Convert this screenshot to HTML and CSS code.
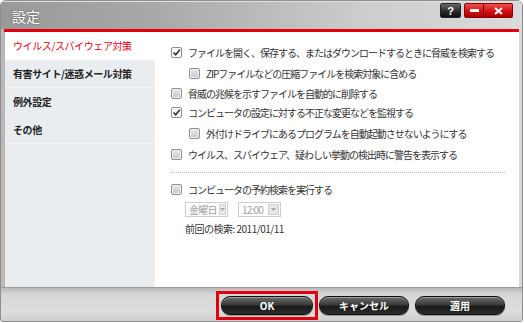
FILE: index.html
```html
<!DOCTYPE html>
<html lang="ja">
<head>
<meta charset="UTF-8">
<title>設定</title>
<link rel="stylesheet" href="styles.css">
</head>
<body>
<div class="window">
    <div class="titlebar">
        <span class="title">設定</span>
        <div class="controls">
            <span class="ctl help">?</span>
            <span class="ctl min"><svg width="9" height="3" viewBox="0 0 9 3"><rect width="9" height="3" fill="#fff"/></svg></span>
            <span class="ctl close"><svg width="9" height="8" viewBox="0 0 9 8"><path d="M1 1 L8 7 M8 1 L1 7" stroke="#fff" stroke-width="2.2"/></svg></span>
        </div>
    </div>
    <div class="accent"></div>

    <div class="main">
        <ul class="sidebar">
            <li class="active">ウイルス/スパイウェア対策</li>
            <li>有害サイト/迷惑メール対策</li>
            <li>例外設定</li>
            <li>その他</li>
        </ul>

        <div class="content">
            <label class="row"><span class="cb checked"></span>ファイルを開く、保存する、またはダウンロードするときに脅威を検索する</label>
            <label class="row sub"><span class="cb"></span>ZIPファイルなどの圧縮ファイルを検索対象に含める</label>
            <label class="row tight"><span class="cb"></span>脅威の兆候を示すファイルを自動的に削除する</label>
            <label class="row"><span class="cb checked"></span>コンピュータの設定に対する不正な変更などを監視する</label>
            <label class="row sub"><span class="cb"></span>外付けドライブにあるプログラムを自動起動させないようにする</label>
            <label class="row"><span class="cb"></span>ウイルス、スパイウェア、疑わしい挙動の検出時に警告を表示する</label>

            <div class="divider"></div>

            <label class="row"><span class="cb"></span>コンピュータの予約検索を実行する</label>
            <div class="schedule">
                <span class="select day">金曜日<span class="arrow"></span></span>
                <span class="select time">12:00<span class="arrow"></span></span>
            </div>
            <div class="last-scan">前回の検索: 2011/01/11</div>
        </div>
    </div>

    <div class="footer">
        <span class="ok-frame"><button class="btn ok">OK</button></span>
        <button class="btn">キャンセル</button>
        <button class="btn">適用</button>
    </div>
</div>
</body>
</html>
```

FILE: styles.css
```css
body {
    margin: 0;
    padding: 0;
    background-color: #fff;
    font-family: "Noto Sans CJK JP", "Liberation Sans", sans-serif;
}

.window {
    width: 521px;
    height: 320px;
    border: 1px solid #8e8e8e;
    border-radius: 6px 6px 3px 3px;
    background: linear-gradient(90deg, #b9b9b9, #cfcfcf 60%, #d9d9d9);
    display: flex;
    flex-direction: column;
    overflow: hidden;
}

/* title bar */
.titlebar {
    height: 28px;
    display: flex;
    align-items: flex-start;
    justify-content: space-between;
    background: linear-gradient(90deg, #999 0%, #a9a9a9 30%, #cdcdcd 70%, #dadada 100%);
    box-shadow: inset 0 1px 0 #e2e2e2;
}

.title {
    color: #fff;
    font-size: 14px;
    line-height: 14px;
    margin: 8px 0 0 11px;
    text-shadow: 0 0 2px rgba(0, 0, 0, 0.45);
}

.controls {
    display: flex;
    margin: 2px 9px 0 0;
}

.ctl {
    height: 13px;
    display: flex;
    align-items: center;
    justify-content: center;
    border-radius: 2px;
    color: #fff;
    font: bold 11px "Liberation Sans", sans-serif;
}

.help {
    width: 19px;
    margin-right: 3px;
    background: linear-gradient(#6a6a6a, #2a2a2a 55%, #111);
    border: 1px solid #222;
}

.min,
.close {
    background: linear-gradient(#f05050, #d01010 55%, #a80000);
    border: 1px solid #8a0000;
}

.min {
    width: 18px;
    border-radius: 2px 0 0 2px;
}

.close {
    width: 28px;
    border-left: none;
    border-radius: 0 2px 2px 0;
}

.accent {
    height: 3px;
    margin: 0 3px;
    background-color: #e4000b;
}

/* main area */
.main {
    height: 255px;
    margin: 0 3px;
    display: flex;
    background-color: #fff;
}

.sidebar {
    width: 150px;
    margin: 0;
    padding: 0;
    list-style: none;
    background-color: #e9edef;
    border-left: 1px solid #b4b4b4;
}

.sidebar li {
    height: 27px;
    line-height: 27px;
    padding-left: 8px;
    font-size: 10px;
    font-weight: bold;
    letter-spacing: -0.4px;
    color: #222;
    border-bottom: 1px dotted #fff;
}

.sidebar li.active {
    background-color: #fff;
    color: #e0061a;
    font-weight: normal;
}

.content {
    flex: 1;
    padding: 10px 0 0 16px;
    font-size: 10px;
    letter-spacing: -1px;
    color: #333;
}

.row {
    height: 21px;
    display: flex;
    align-items: center;
    white-space: nowrap;
}

.row.tight {
    height: 18px;
}

.row.sub {
    padding-left: 18px;
}

.cb {
    width: 9px;
    height: 9px;
    margin-right: 6px;
    border: 1px solid #8e8e8e;
    border-radius: 2px;
    background: linear-gradient(#e6e6e6, #c9c9c9);
    box-shadow: inset 0 0 0 1px #f2f2f2;
    flex-shrink: 0;
}

.cb.checked {
    background: #fafafa url("data:image/svg+xml,%3Csvg xmlns='http://www.w3.org/2000/svg' width='9' height='9'%3E%3Cpath d='M1.5 4.5 L3.7 6.8 L7.8 1.8' fill='none' stroke='%23333' stroke-width='1.6'/%3E%3C/svg%3E") no-repeat center;
    box-shadow: none;
}

.divider {
    margin: 7px 14px 6px 0;
    border-top: 1px dotted #b8b8b8;
}

.schedule {
    display: flex;
    gap: 10px;
    margin: 2px 0 0 14px;
}

.select {
    box-sizing: border-box;
    width: 43px;
    height: 15px;
    display: flex;
    align-items: center;
    justify-content: space-between;
    padding-left: 3px;
    border: 1px solid #cdcdcd;
    color: #a0a0a0;
    font-size: 10px;
    letter-spacing: -0.8px;
    white-space: nowrap;
}

.select .arrow {
    width: 11px;
    height: 11px;
    margin: 0 1px 0 2px;
    background: #e8e8e8 url("data:image/svg+xml,%3Csvg xmlns='http://www.w3.org/2000/svg' width='11' height='11'%3E%3Cpath d='M3 4 L8 4 L5.5 7 Z' fill='%23a8a8a8'/%3E%3C/svg%3E") no-repeat center;
    border: 1px solid #d0d0d0;
    box-sizing: border-box;
}

.last-scan {
    margin: 4px 0 0 14px;
    font-size: 10px;
    letter-spacing: -0.5px;
    color: #333;
}

/* footer */
.footer {
    flex: 1;
    display: flex;
    justify-content: flex-end;
    align-items: flex-start;
    gap: 6px;
    padding: 8px 17px 0 0;
    background: linear-gradient(#b8b8b8, #d6d6d6 20%, #dedede 70%, #cfcfcf);
    border-top: 1px solid #9d9d9d;
}

.btn {
    width: 90px;
    height: 19px;
    padding: 0;
    border: 1px solid #111;
    border-radius: 9px;
    background: linear-gradient(#6c6c6c, #3a3a3a 45%, #1a1a1a 55%, #2c2c2c);
    box-shadow: inset 0 1px 0 rgba(255, 255, 255, 0.35), 0 1px 1px rgba(0, 0, 0, 0.3);
    color: #fff;
    font-family: "Noto Sans CJK JP", "Liberation Sans", sans-serif;
    font-size: 10px;
    font-weight: bold;
    line-height: 17px;
}

/* red annotation box around the OK button */
.ok-frame {
    display: flex;
    margin: -5px;
    padding: 2px;
    border: 3px solid #e2000e;
}

.btn.ok {
    width: 92px;
}
```
